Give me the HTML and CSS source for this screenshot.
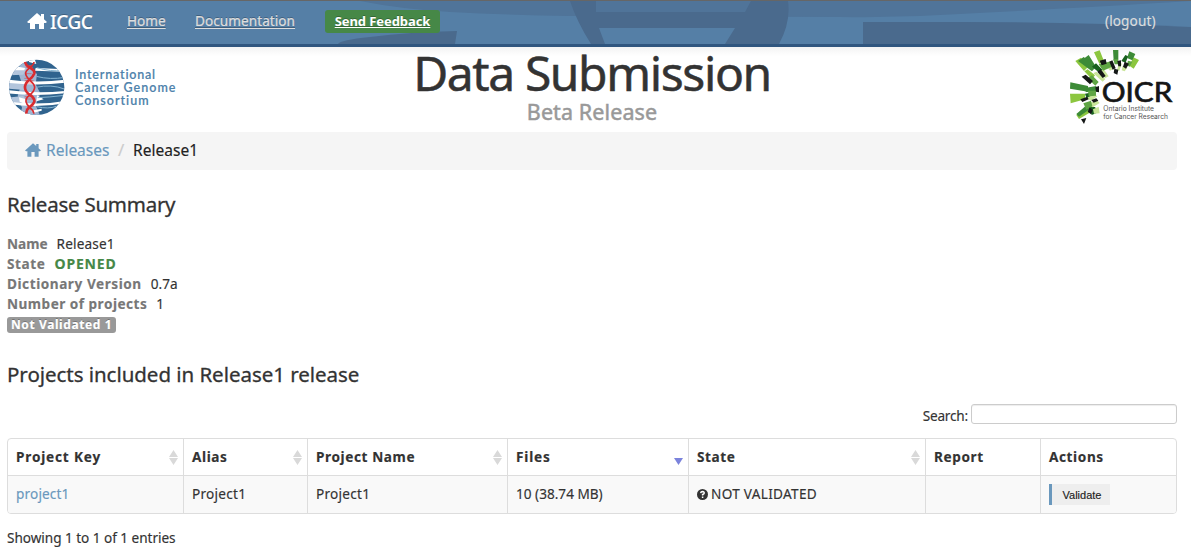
FILE: index.html
```html
<!DOCTYPE html>
<html lang="en">
<head>
<meta charset="utf-8">
<title>Data Submission</title>
<link rel="stylesheet" href="styles.css">
</head>
<body>
<nav class="navbar">
  <svg class="navbar-art" width="1191" height="43" viewBox="0 1 1191 43" aria-hidden="true">
    <path fill="#507499" d="M360 1Q400 9 450 12Q510 15 570 16L840 17Q900 18 960 14Q1060 9 1191 1Z"/>
    <path fill="#4a6a8d" d="M338 44Q340 40 370 37Q410 32 457 31L455 44Z"/>
    <path fill="#4a6a8d" d="M570 1H596V12H745L751 1H788Q791 22 779 44H725L735 28H599L605 44H591Q577 22 570 1Z"/>
    <path fill="#4a6a8d" d="M863 22H960Q1080 22 1191 27V44H863Z"/>
  </svg>
  <a class="brand"><svg width="20" height="17" viewBox="0 0 20 17"><path fill="#fff" d="M10 0L0 9L1.300 10H3V16H8V11H12V16H17V10H18.700L20 9L17 6.200V1H14V3.600Z"/></svg><span class="brand-name">ICGC</span></a>
  <a class="nav-link nav-home">Home</a>
  <a class="nav-link nav-docs">Documentation</a>
  <a class="feedback">Send Feedback</a>
  <a class="logout">(logout)</a>
</nav>
<header class="masthead">
  <div class="icgc-logo">
    <svg width="64" height="62" viewBox="0 0 192 186">
      <defs><clipPath id="globe"><circle cx="95" cy="94" r="83"/></clipPath></defs>
      <g clip-path="url(#globe)">
        <rect width="192" height="186" fill="#30638e"/>
        <path fill="#9fb5d2" d="M48 0L72 0L60 25L96 54L92 85L106 112L92 148L110 190H42L51 155L38 120L50 80L40 50Z"/>
        <path fill="#b3c5dc" d="M0 38L65 35L55 56L12 58ZM8 78H58V102L8 98ZM10 125L55 120L72 150L15 145Z"/>
        <path fill="#fff" d="M72 4L88 6L94 24L72 18ZM32 31L60 36L58 43L26 43ZM92 36L192 40V48L90 44ZM5 70Q100 83 190 70V79Q100 91 5 80ZM5 102Q95 115 190 104V111Q95 122 5 112ZM8 137Q100 150 185 134V141Q100 158 12 144ZM42 124L64 130L61 145L44 137ZM96 118L116 130L94 136ZM78 164L110 158V164L86 170Z"/>
        <path fill="none" stroke="#86b5d2" stroke-width="3" d="M95 35Q140 48 172 43M94 61Q135 72 180 64M92 94Q140 84 178 99M98 125Q130 124 179 118M95 152Q130 160 154 151"/>
      </g>
      <path stroke="#d85055" stroke-width="2" d="M60 29H80M62 34H84M60 53H80M58 67H83M59 74H86M61 81H84M62 115H82M59 122H84M60 129H84M66 151H86M62 159H81"/>
      <path fill="none" stroke="#d92b2f" stroke-width="8" d="M60 18C66 40 92 36 88 52C80 75 58 72 60 96C62 119 91 117 88 137C83 154 63 151 64 173"/>
      <path fill="none" stroke="#d92b2f" stroke-width="5" d="M87 18C86 34 60 38 62 53C64 72 88 76 89 94C88 119 60 115 63 137C65 153 83 153 87 173"/>
    </svg>
    <div class="icgc-words"><span class="w1">International</span><span class="w2">Cancer Genome</span><span class="w3">Consortium</span></div>
  </div>
  <div class="heading">
    <h1>Data Submission</h1>
    <p class="subtitle">Beta Release</p>
  </div>
  <svg class="oicr" width="110" height="80" viewBox="0 0 330 240">
    <g fill="#8cc63f"><path d="M28 45L45 35L66 63L54 75ZM84 19L101 13L115 48L100 53ZM202 34L219 42L203 68L190 59ZM55 76L65 70L87 88L78 100ZM12 143H57V160L14 172ZM31 207L75 181L81 194L39 219Z"/></g>
    <g fill="#3d8b37"><path d="M36 45L53 33L90 62L78 76ZM49 41L68 27L90 62L78 73ZM13 109L66 120V137L12 128ZM141 12H157V44H143ZM190 16L208 24L199 43L183 36ZM31 204L66 174L79 184L39 212ZM56 126L91 120V138L59 138Z"/></g>
    <g fill="#18601e"><path d="M78 62L90 52L110 72L100 80ZM57 143L80 139L83 155L62 159ZM166 45L178 27L186 31L179 50ZM68 182L87 183L97 199L77 207Z"/></g>
    <g fill="#c9e59a"><path d="M102 74L113 69L128 91L117 97ZM82 82L91 77L118 99L110 107ZM60 156L86 145L94 151L75 164ZM120 57L133 52L143 68L132 74ZM160 49L168 53L160 74L153 72ZM66 174L92 161L101 171L80 184ZM81 190L98 182L101 202L84 203ZM170 60L184 65L176 76L167 73Z"/></g>
    <g fill="#5fa544"><path d="M64 97L78 88L98 108L88 119ZM98 55L120 49L130 66L111 74ZM118 50L134 46L139 62L127 67ZM66 134H90V149L68 151ZM142 40H156V55H146ZM186 44L199 47L191 62L182 58ZM52 172L75 164L79 181L61 191Z"/></g>
    <g fill="#151817"><path d="M47 92L59 86L81 105L72 115ZM94 77L104 69L119 90L110 96ZM101 44L119 39L122 53L107 58ZM130 47L139 43L149 67L140 71ZM154 45L165 43V61H157ZM176 47L189 53L180 68L171 62ZM145 68L157 71L154 86L143 81ZM88 124L99 120V139L90 137ZM43 160L64 152L68 160L49 168ZM76 162L91 157L97 164L83 170ZM45 220L61 216L54 234ZM71 184L80 192L75 205L65 197Z"/></g>
    <text class="oicr-name" x="107" y="168" textLength="212" lengthAdjust="spacingAndGlyphs">OICR</text>
    <text class="oicr-sub" x="112" y="196" textLength="152" lengthAdjust="spacingAndGlyphs">Ontario Institute</text>
    <text class="oicr-sub" x="112" y="220" textLength="194" lengthAdjust="spacingAndGlyphs">for Cancer Research</text>
  </svg>
</header>
<main>
  <div class="breadcrumb">
    <svg width="16" height="14" viewBox="0 0 20 17"><path fill="#6a98bd" d="M10 0L0 9L1.300 10H3V17H8V11H12V17H17V10H18.700L20 9L17 6.200V1H14V3.600Z"/></svg>
    <a class="crumb">Releases</a><span class="slash">/</span><span class="current">Release1</span>
  </div>
  <section class="summary">
    <h2 class="h-summary">Release Summary</h2>
    <dl>
      <div><dt class="l-name">Name</dt><dd class="v-name">Release1</dd></div>
      <div><dt class="l-state">State</dt><dd class="opened">OPENED</dd></div>
      <div><dt class="l-dict">Dictionary Version</dt><dd>0.7a</dd></div>
      <div><dt class="l-num">Number of projects</dt><dd>1</dd></div>
    </dl>
    <div class="badge">Not Validated 1</div>
  </section>
  <section>
    <h2 class="h-projects">Projects included in Release1 release</h2>
    <label class="search"><span>Search:</span><input type="text"></label>
    <div class="frame">
      <table>
        <colgroup><col class="c1"><col class="c2"><col class="c3"><col class="c4"><col class="c5"><col class="c6"><col></colgroup>
        <thead><tr>
          <th class="sort"><span class="t-key">Project Key</span></th><th class="sort">Alias</th><th class="sort">Project Name</th><th class="desc"><span class="t-key">Files</span></th><th class="sort">State</th><th>Report</th><th>Actions</th>
        </tr></thead>
        <tbody><tr>
          <td><a class="project-link">project1</a></td><td><span class="d-proj">Project1</span></td><td><span class="d-proj">Project1</span></td><td>10 (38.74 MB)</td>
          <td><span class="status"><svg width="11" height="11" viewBox="0 0 11 11"><circle cx="5.500" cy="5.500" r="5.500" fill="#333"/><path d="M3.700 4.200Q3.900 2.600 5.600 2.600Q7.300 2.700 7.200 4.100Q7 5 5.600 5.500V6.500M5.600 7.400V8.900" fill="none" stroke="#fff" stroke-width="1.500"/></svg><span class="d-state">NOT VALIDATED</span></span></td>
          <td></td><td><button class="validate">Validate</button></td>
        </tr></tbody>
      </table>
    </div>
    <p class="info">Showing 1 to 1 of 1 entries</p>
  </section>
</main>
</body>
</html>
```
FILE: styles.css
```css
* { box-sizing: border-box; }
body { margin: 0; height: 556px; overflow: hidden; background: #fff; color: #333; font: 13.6px/20px "Noto Sans", "Open Sans", sans-serif; -webkit-text-stroke: .15px currentColor; }
h1, h2, p, dl, dd { margin: 0; font-weight: 400; }
.navbar { position: relative; height: 47px; border-top: 1px solid #666; border-bottom: 3px solid #30567f; background: #557fa6; display: flex; align-items: flex-start; padding-left: 27px; }
.navbar-art { position: absolute; left: 0; top: 0; }
.navbar a { position: relative; white-space: nowrap; }
.brand { display: flex; width: 100px; padding-top: 12px; color: #fff; text-shadow: 0 -1px 0 rgba(0,0,0,.25); }
.brand-name { margin-left: 3px; font-size: 19px; line-height: 18px; font-weight: 500; letter-spacing: -.45px; }
.nav-link { color: #ddd; padding-top: 10px; text-decoration: underline; text-decoration-thickness: 1px; text-underline-offset: 2px; text-shadow: 0 -1px 0 rgba(0,0,0,.25); }
.nav-home { width: 68px; letter-spacing: 0; }
.nav-docs { width: 130px; letter-spacing: .05px; }
.feedback { width: 115px; height: 23px; margin-top: 9px; border-radius: 3px; background: #468847; color: #fff; font-size: 13px; line-height: 23px; font-weight: 700; letter-spacing: -.08px; text-align: center; text-decoration: underline; text-shadow: 0 -1px 0 rgba(0,0,0,.25); -webkit-text-stroke: 0; }
.logout { margin-left: auto; width: 86px; padding-top: 10px; color: #ddd; letter-spacing: .1px; }
.masthead { display: flex; height: 85px; padding-left: 5px; background: linear-gradient(#f3f3f3, #fff 9px); }
.icgc-logo { display: flex; width: 360px; padding-top: 9px; }
.icgc-words { display: flex; flex-direction: column; padding: 13px 0 0 6px; color: #4f83ac; font: 600 12.500px/12.800px Lato, sans-serif; white-space: nowrap; }
.w1 { letter-spacing: .8px; }
.w2, .w3 { letter-spacing: 1px; }
.heading { width: 454px; text-align: center; padding-top: 2px; }
h1 { font-size: 48px; line-height: 48px; letter-spacing: -1.400px; white-space: nowrap; -webkit-text-stroke: .5px currentColor; }
.subtitle { color: #999; font-size: 21.500px; line-height: 22px; margin-top: 4px; letter-spacing: .1px; -webkit-text-stroke: .5px currentColor; }
.oicr { margin-left: 247px; margin-top: -1px; -webkit-text-stroke: 0; }
.oicr-name { font: 400 79px Lato, sans-serif; fill: #151515; stroke: #151515; stroke-width: 2; }
.oicr-sub { font: 400 21px Inter, sans-serif; fill: #555; }
main { width: 1170px; margin-left: 7px; }
.breadcrumb { height: 38px; border-radius: 4px; background: #f5f5f5; display: flex; align-items: center; padding: 0 0 2px 18px; font-size: 15.500px; white-space: nowrap; }
.crumb { width: 71px; margin-left: 5px; color: #6a98bd; letter-spacing: 0; }
.slash { width: 16px; margin-left: 1px; margin-right: -1px; color: #ccc; font-size: 17px; }
.current { letter-spacing: .05px; color: #222; }
h2 { font-size: 20.500px; line-height: 28px; white-space: nowrap; -webkit-text-stroke: .3px currentColor; }
.summary { padding-top: 20px; }
.h-summary { letter-spacing: -.25px; margin-bottom: 16px; }
dl > div { display: flex; height: 20px; gap: 9px; }
dt { font-weight: 700; color: #777; }
.v-name { letter-spacing: .15px; }
.l-state { letter-spacing: .6px; }
.l-dict { letter-spacing: .55px; }
.l-num { letter-spacing: .48px; }
.opened { color: #468847; font-size: 14px; font-weight: 700; letter-spacing: .8px; }
.badge { width: 109px; height: 16px; margin-top: 3px; border-radius: 3px; background: #999; color: #fff; font-size: 12px; font-weight: 700; line-height: 15px; letter-spacing: .6px; padding-left: 4px; white-space: nowrap; text-shadow: 0 -1px 0 rgba(0,0,0,.25); }
.h-projects { margin-top: 27px; letter-spacing: -.04px; }
.search { display: flex; justify-content: flex-end; margin-top: 16px; height: 34px; }
.search span { padding-top: 2px; margin-right: 3px; letter-spacing: -.2px; }
.search input { width: 206px; height: 20px; border: 1px solid #ccc; border-radius: 3px; box-shadow: inset 0 1px 1px rgba(0,0,0,.075); }
.frame { height: 76px; border: 1px solid #ddd; border-radius: 4px; overflow: hidden; }
table { width: 1168px; table-layout: fixed; border-collapse: separate; border-spacing: 0; }
.c1 { width: 175px; }
.c2 { width: 124px; }
.c3 { width: 200px; }
.c4 { width: 181px; }
.c5 { width: 237px; }
.c6 { width: 115px; }
th, td { padding: 0 8px; border-left: 1px solid #ddd; text-align: left; white-space: nowrap; vertical-align: middle; }
th:first-child, td:first-child { border-left: 0; }
th { height: 36px; letter-spacing: .6px; }
.t-key { letter-spacing: .82px; }
td { height: 38px; padding-bottom: 1px; border-top: 1px solid #ddd; background: #f9f9f9; }
.sort, .desc { background-repeat: no-repeat; background-position: right 5px top 11px; }
.sort { background-image: url("data:image/svg+xml,%3Csvg xmlns='http://www.w3.org/2000/svg' width='9' height='15'%3E%3Cpath fill='%23d9d9d9' d='M4.500 0L9 7H0ZM0 8H9L4.500 15Z'/%3E%3C/svg%3E"); }
.desc { background-image: url("data:image/svg+xml,%3Csvg xmlns='http://www.w3.org/2000/svg' width='9' height='15'%3E%3Cpath fill='%237b83dc' d='M0 8H9L4.500 15Z'/%3E%3C/svg%3E"); }
.project-link { color: #6a98bd; letter-spacing: .15px; }
.d-proj { letter-spacing: .25px; }
.status { display: flex; align-items: center; gap: 3px; }
.d-state { letter-spacing: .3px; }
.validate { display: block; width: 61px; height: 21px; margin: 1px 0 0; padding: 0 0 0 2px; border: 0; border-left: 3px solid #6a98bd; background: #eee; color: #222; font: 11px "Liberation Sans", sans-serif; }
.info { margin-top: 14px; letter-spacing: -.04px; }
```
